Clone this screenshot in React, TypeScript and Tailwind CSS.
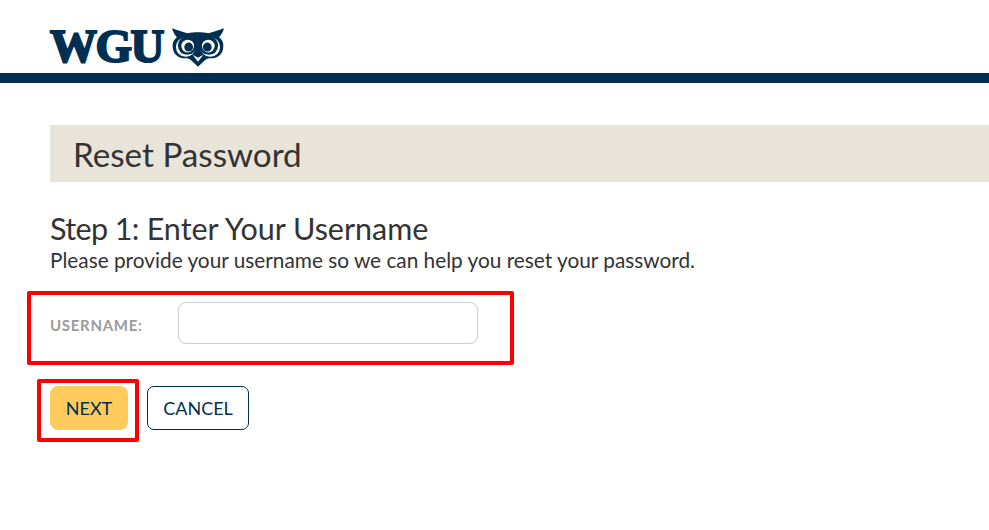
import React from "react";

const Owl = () => (
  <svg width="52" height="39" viewBox="0 0 53 39" className="block">
    <path
      d="M0 0 C6 2 11 4 16 5 C22 3.500 31 3.500 37 5 C42 4 47 2 53 0 C52 4 50 7 48 9 C52 12 53 16 52 21 C51 27 46 30.500 40 30.500 C37 30.500 35 31 33 33 L26.500 39 L20 33 C18 31 16 30.500 13 30.500 C7 30.500 2 27 1 21 C0 16 1 12 5 9 C3 7 1 4 0 0 Z"
      fill="#002f51"
    />
    <circle cx="14" cy="19" r="10" fill="#ffffff" />
    <circle cx="39" cy="19" r="10" fill="#ffffff" />
    <circle cx="15.500" cy="17.500" r="9.500" fill="#002f51" />
    <circle cx="37.500" cy="17.500" r="9.500" fill="#002f51" />
    <circle cx="16" cy="18" r="6.500" fill="#ffffff" />
    <circle cx="37" cy="18" r="6.500" fill="#ffffff" />
    <circle cx="17" cy="19" r="4.500" fill="#002f51" />
    <circle cx="36" cy="19" r="4.500" fill="#002f51" />
    <path d="M21 27 L26.500 34 L32 27 L26.500 30 Z" fill="#ffffff" />
  </svg>
);

export default function App() {
  return (
    <div className="relative h-[530px] w-[989px] overflow-hidden bg-white font-['Lato',sans-serif] text-[#333333]">
      <header className="flex h-[83px] items-start border-b-[10px] border-[#002f51] pl-[50px] pt-[28px]">
        <span className="font-['Liberation_Serif',serif] text-[47px] font-bold leading-[37px] tracking-[-1.500px] text-[#002f51] [-webkit-text-stroke:2px_#002f51]">
          WGU
        </span>
        <div className="ml-[9px]">
          <Owl />
        </div>
      </header>

      <main className="pl-[50px] pt-[42px]">
        <h1 className="flex h-[57px] items-center bg-[#e8e4d9] pl-[23px] pt-[2px] text-[33.200px] leading-none">
          Reset Password
        </h1>
        <h2 className="mt-[29px] text-[30.500px] leading-[35px]">
          <span className="tracking-[-0.600px]">Step 1:</span> Enter Your Username
        </h2>
        <p className="text-[20.800px] leading-[28px]">
          Please provide your username so we can help you reset your password.
        </p>

        <div className="mt-[28px] flex items-center">
          <label className="w-[128px] pt-[4px] text-[15px] font-bold tracking-[0.700px] text-[#9b9b9b]">
            USERNAME:
          </label>
          <input
            type="text"
            className="h-[42px] w-[300px] rounded-[8px] border border-[#cccccc] bg-white"
          />
        </div>

        <div className="mt-[42px] flex gap-[19px]">
          <button className="h-[44px] w-[78px] rounded-[8px] bg-[#ffcb5c] text-[18px] text-[#002f51]">
            NEXT
          </button>
          <button className="h-[44px] w-[102px] rounded-[7px] border border-[#002f51] bg-white text-[18px] text-[#002f51]">
            CANCEL
          </button>
        </div>
      </main>

      {/* red annotation boxes over the form */}
      <div className="absolute left-[27px] top-[291px] h-[74px] w-[487px] rounded-[2px] border-[4px] border-[#ff0000]" />
      <div className="absolute left-[37px] top-[379px] h-[63px] w-[102px] rounded-[2px] border-[4px] border-[#ff0000]" />
    </div>
  );
}
